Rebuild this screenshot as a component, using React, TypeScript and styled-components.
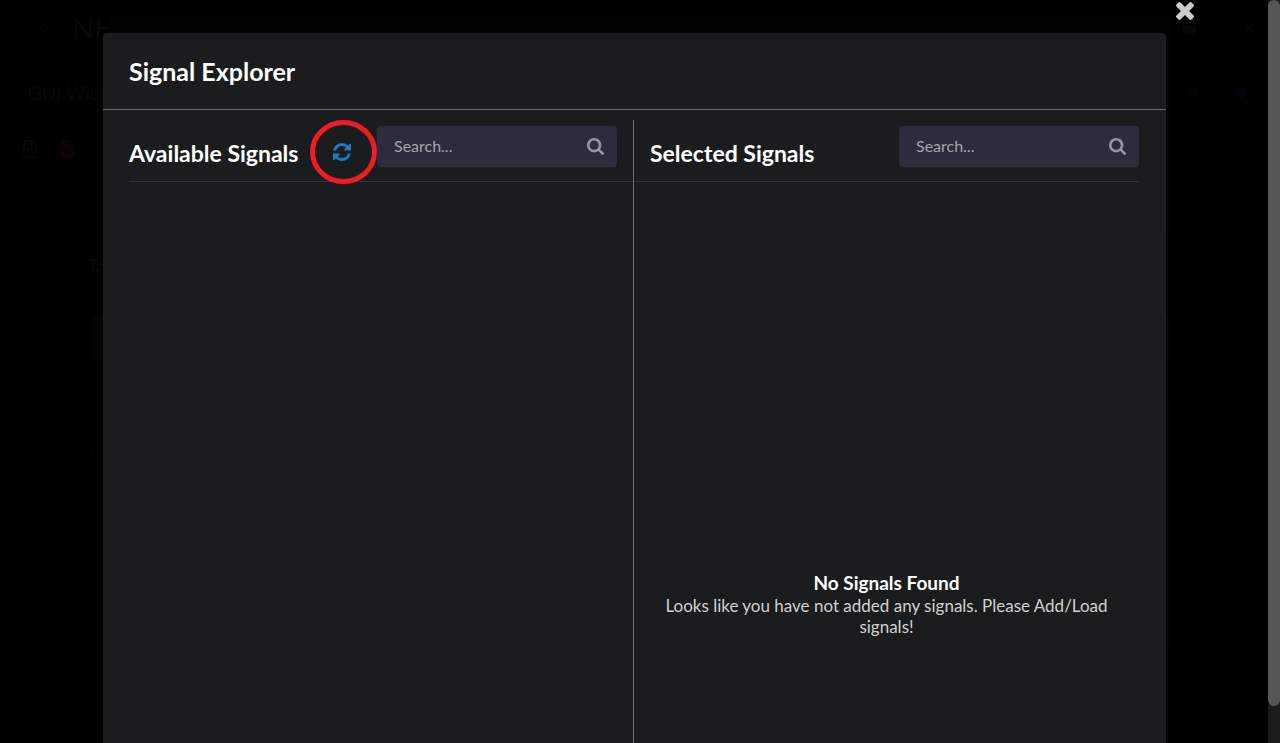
import React from "react";
import styled, { createGlobalStyle } from "styled-components";
import { FaTimes, FaFileAlt, FaCircle, FaWindowMaximize, FaRegFileAlt } from "react-icons/fa";

const GlobalStyle = createGlobalStyle`
  *, *::before, *::after { box-sizing: border-box; }
  html, body, #root { height: 100%; }
  body {
    margin: 0;
    overflow: hidden;
    background: #000;
    color: #fff;
    font-family: Lato, "Helvetica Neue", Arial, sans-serif;
    font-size: 16px;
  }
  h1, h2, h3, p { margin: 0; }
  button { padding: 0; border: 0; background: none; cursor: pointer; font: inherit; }
`;

const Shell = styled.div`
  position: relative;
  height: 100%;
  display: flex;
  overflow: hidden;
`;

const Page = styled.main`
  flex: 1;
  min-width: 0;
  color: #080808;
`;

const TopBar = styled.header`
  display: flex;
  align-items: center;
  justify-content: space-between;
  height: 54px;
  padding: 0 12px 0 20px;
`;

const Brand = styled.div`
  display: flex;
  align-items: center;
  gap: 10px;
  font-size: 29px;
`;

const Actions = styled.div<{ $gap: number }>`
  display: flex;
  align-items: center;
  gap: ${(p) => p.$gap}px;
  font-size: 13px;
`;

const PageRow = styled.div`
  display: flex;
  align-items: center;
  justify-content: space-between;
  height: 76px;
  padding: 0 20px 0 28px;
  font-size: 19px;
`;

const ToolRow = styled.div`
  display: flex;
  gap: 20px;
  height: 36px;
  padding: 10px 21px;
  font-size: 18px;
`;

const Workspace = styled.section`
  margin: 90px 96px 0 88px;
`;

const WorkspaceTitle = styled.h2`
  font-size: 18px;
  line-height: 20px;
`;

const FieldBlock = styled.div`
  height: 45px;
  margin: 40px 3px 38px;
  border-radius: 4px;
  background: #040404;
`;

const Grid = styled.div`
  height: 250px;
  margin: 0 3px;
  border: 1px solid #040404;
`;

const GridHead = styled.div`
  height: 50px;
  border-bottom: 1px solid #040404;
`;

const PanelBehind = styled.div`
  position: absolute;
  top: 16px;
  left: 109px;
  right: 108px;
  height: 218px;
  border-radius: 4px;
  background: #030303;
`;

const Overlay = styled.div`
  position: absolute;
  inset: 0 12px 0 0;
  display: flex;
  padding: 33px 102px 0 103px;
`;

const Dialog = styled.section`
  position: relative;
  flex: 1;
  display: flex;
  flex-direction: column;
  min-width: 0;
  border-radius: 4px 4px 0 0;
  background: #1b1c1d;
`;

const CloseButton = styled.button`
  position: absolute;
  top: -31px;
  right: -28px;
  display: flex;
  color: #cccccc;
`;

const DialogHeader = styled.header`
  padding: 20px 26px;
  border-bottom: 1px solid #6b6c6d;
`;

const DialogTitle = styled.h1`
  font-size: 25px;
  line-height: 36px;
  font-weight: 700;
`;

const Columns = styled.div`
  flex: 1;
  display: grid;
  grid-template-columns: 504fr 506fr;
  padding: 10px 27px 0 26px;
`;

const Column = styled.section<{ $divided?: boolean }>`
  display: flex;
  flex-direction: column;
  min-width: 0;
  border-left: ${(p) => (p.$divided ? "1px solid #6b6c6d" : "0")};
`;

const ColumnHeader = styled.header<{ $inset?: boolean }>`
  display: flex;
  align-items: flex-start;
  height: 62px;
  padding: 6px ${(p) => (p.$inset ? 0 : 16)}px 0 ${(p) => (p.$inset ? 16 : 0)}px;
  border-bottom: 1px solid #333435;
`;

const ColumnTitle = styled.h2`
  flex: 1;
  font-size: 23px;
  line-height: 54px;
  font-weight: 700;
  white-space: nowrap;
`;

const RefreshButton = styled.button`
  position: relative;
  display: flex;
  margin: 17px 26px 0 0;
  color: #1f7ac4;
`;

const Highlight = styled.svg`
  position: absolute;
  top: -24px;
  left: -24px;
  width: 68px;
  height: 66px;
  max-width: none;
  pointer-events: none;
`;

const SearchBox = styled.label`
  flex: 0 0 240px;
  min-width: 0;
  display: flex;
  align-items: center;
  height: 41px;
  padding: 0 13px 0 17px;
  border-radius: 4px;
  background: #2b2d3e;
  color: #95969f;
`;

const SearchInput = styled.input`
  flex: 1;
  width: 100%;
  min-width: 0;
  height: 39px;
  padding: 0 0 2px;
  border: 0;
  outline: 0;
  background: transparent;
  color: #fff;
  font: inherit;
  &::placeholder { color: #a2a3a8; opacity: 1; }
`;

const Empty = styled.div`
  padding: 389px 20px 0;
  text-align: center;
  color: #d0d0d0;
  font-size: 17px;
  line-height: 21px;
`;

const EmptyTitle = styled.h3`
  color: #fff;
  font-size: 19px;
  line-height: 24px;
  font-weight: 700;
`;

const ScrollTrack = styled.div`
  flex: 0 0 12px;
  background: #1b1b1b;
`;

const ScrollThumb = styled.div`
  height: 95%;
  border-radius: 6px;
  background: #555555;
`;

const CloseIcon = () => (
  <svg width="18" height="18" viewBox="110 366 1188 1188" fill="currentColor" aria-hidden="true">
    <path d="M1298 1322q0 40-28 68l-136 136q-28 28-68 28t-68-28l-294-294-294 294q-28 28-68 28t-68-28l-136-136q-28-28-28-68t28-68l294-294-294-294q-28-28-28-68t28-68l136-136q28-28 68-28t68 28l294 294 294-294q28-28 68-28t68 28l136 136q28 28 28 68t-28 68l-294 294 294 294q28 28 28 68z" />
  </svg>
);

const SearchIcon = () => (
  <svg width="17" height="17" viewBox="0 128 1664 1664" fill="currentColor" aria-hidden="true">
    <path d="M1152 832q0-185-131.5-316.5t-316.5-131.5-316.5 131.5-131.5 316.5 131.5 316.5 316.5 131.5 316.5-131.5 131.5-316.5zm512 832q0 52-38 90t-90 38q-54 0-90-38l-343-342q-179 124-399 124-143 0-273.5-55.5t-225-150-150-225-55.5-273.5 55.5-273.5 150-225 225-150 273.5-55.5 273.5 55.5 225 150 150 225 55.5 273.5q0 220-124 399l343 343q37 37 37 90z" />
  </svg>
);

const RefreshIcon = () => (
  <svg width="18" height="18" viewBox="0 0 1536 1536" fill="currentColor" aria-hidden="true">
    <path d="M1511 928q0 5-1 7-64 268-268 434.5t-478 166.5q-146 0-282.5-55t-243.5-157l-129 129q-19 19-45 19t-45-19-19-45v-448q0-26 19-45t45-19h448q26 0 45 19t19 45-19 45l-137 137q71 66 161 102t187 36q134 0 250-65t186-179q11-17 53-117 8-23 30-23h192q13 0 22.5 9.5t9.5 22.5zm25-800v448q0 26-19 45t-45 19h-448q-26 0-45-19t-19-45 19-45l138-138q-148-137-349-137-134 0-250 65t-186 179q-11 17-53 117-8 23-30 23h-199q-13 0-22.5-9.5t-9.5-22.5v-7q65-268 270-434.5t480-166.5q146 0 284 55.5t245 156.5l130-129q19-19 45-19t45 19 19 45z" />
  </svg>
);

function SearchField({ label }: { label: string }) {
  return (
    <SearchBox>
      <SearchInput type="text" placeholder="Search..." aria-label={label} />
      <SearchIcon />
    </SearchBox>
  );
}

export default function App() {
  return (
    <>
      <GlobalStyle />
      <Shell>
        <Page aria-hidden="true">
          <TopBar>
            <Brand>
              <svg width="42" height="42" viewBox="0 0 42 42" fill="none" stroke="#090604" strokeWidth="1">
                <circle cx="21" cy="21" r="19" />
                <path d="M13 13l8 8-8 8M20 13l8 8-8 8" />
              </svg>
              NH
            </Brand>
            <Actions $gap={47}>
              <FaWindowMaximize />
              <FaTimes />
            </Actions>
          </TopBar>
          <PageRow>
            GUI Widgets
            <Actions $gap={36}>
              <FaCircle color="#020503" />
              <FaCircle color="#01040a" />
            </Actions>
          </PageRow>
          <ToolRow>
            <FaRegFileAlt />
            <FaFileAlt color="#0c0302" />
          </ToolRow>
          <Workspace>
            <WorkspaceTitle>Tab</WorkspaceTitle>
            <FieldBlock />
            <Grid>
              <GridHead />
            </Grid>
          </Workspace>
        </Page>
        <PanelBehind />
        <Overlay>
          <Dialog role="dialog" aria-labelledby="dialog-title">
            <CloseButton type="button" aria-label="Close">
              <CloseIcon />
            </CloseButton>
            <DialogHeader>
              <DialogTitle id="dialog-title">Signal Explorer</DialogTitle>
            </DialogHeader>
            <Columns>
              <Column>
                <ColumnHeader>
                  <ColumnTitle>Available Signals</ColumnTitle>
                  <RefreshButton type="button" aria-label="Refresh signals">
                    <RefreshIcon />
                    <Highlight viewBox="0 0 68 66" fill="none" stroke="#ee1c25" strokeWidth="5">
                      <ellipse cx="34.5" cy="33" rx="31" ry="29.5" />
                    </Highlight>
                  </RefreshButton>
                  <SearchField label="Search available signals" />
                </ColumnHeader>
              </Column>
              <Column $divided>
                <ColumnHeader $inset>
                  <ColumnTitle>Selected Signals</ColumnTitle>
                  <SearchField label="Search selected signals" />
                </ColumnHeader>
                <Empty>
                  <EmptyTitle>No Signals Found</EmptyTitle>
                  <p>Looks like you have not added any signals. Please Add/Load signals!</p>
                </Empty>
              </Column>
            </Columns>
          </Dialog>
        </Overlay>
        <ScrollTrack>
          <ScrollThumb />
        </ScrollTrack>
      </Shell>
    </>
  );
}
